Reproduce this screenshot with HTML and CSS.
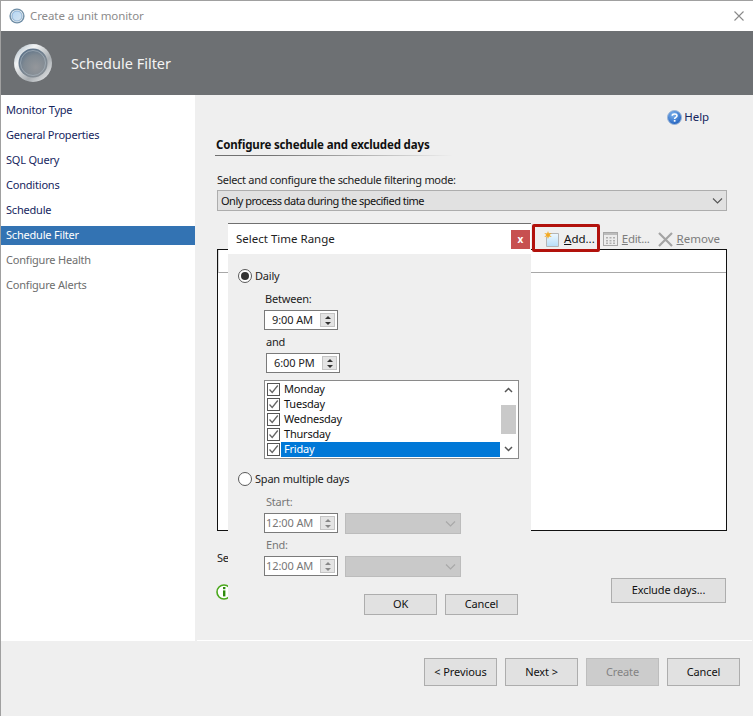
FILE: index.html
```html
<!DOCTYPE html>
<html lang="en">
<head>
<meta charset="utf-8">
<title>Create a unit monitor</title>
<link rel="stylesheet" href="styles.css">
</head>
<body>
<svg class="defs" width="0" height="0" aria-hidden="true">
  <defs>
    <radialGradient id="orbFill" cx="0.6" cy="0.65" r="0.65">
      <stop offset="0" stop-color="#94979b"/><stop offset="0.65" stop-color="#7f8992"/><stop offset="1" stop-color="#5f7489"/>
    </radialGradient>
    <linearGradient id="orbRing" x1="0" y1="0" x2="1" y2="1">
      <stop offset="0" stop-color="#9fb0bd"/><stop offset="0.3" stop-color="#f2f4f5"/><stop offset="0.65" stop-color="#a9aeb2"/><stop offset="1" stop-color="#f4f5f6"/>
    </linearGradient>
    <linearGradient id="smallOrb" x1="0" y1="0" x2="1" y2="1">
      <stop offset="0" stop-color="#b4d6f4"/><stop offset="1" stop-color="#d6e4ef"/>
    </linearGradient>
    <linearGradient id="addFill" x1="0" y1="0" x2="0" y2="1">
      <stop offset="0" stop-color="#eef8ff"/><stop offset="1" stop-color="#b7def8"/>
    </linearGradient>
    <radialGradient id="helpFill" cx="0.4" cy="0.3" r="0.8">
      <stop offset="0" stop-color="#7fb4ee"/><stop offset="1" stop-color="#1556b8"/>
    </radialGradient>
  </defs>
</svg>
<div class="window">
  <div class="titlebar">
    <svg class="title-orb" width="16" height="16" viewBox="0 0 16 16"><circle cx="8" cy="8" r="7.6" fill="#6f8ea6"/><circle cx="8" cy="8" r="6.2" fill="#e4ebf0"/><circle cx="8" cy="8" r="5" fill="url(#smallOrb)" stroke="#7fa6cb" stroke-width="0.8"/></svg>
    <span class="title-text">Create a unit monitor</span>
    <svg class="title-close" width="10" height="10" viewBox="0 0 10 10"><path d="M0.5 0.5L9.5 9.5M9.5 0.5L0.5 9.5" stroke="#8a8a8a" stroke-width="1.1" fill="none"/></svg>
  </div>
  <div class="banner">
    <svg width="38" height="38" viewBox="0 0 38 38"><circle cx="19" cy="19" r="19" fill="url(#orbRing)"/><circle cx="19" cy="19" r="14.5" fill="url(#orbFill)"/><circle cx="19" cy="19" r="12.5" fill="none" stroke="#a8b4be" stroke-width="1" opacity="0.7"/></svg>
    <span class="banner-text">Schedule Filter</span>
  </div>
  <div class="body">
    <nav class="sidebar">
      <div class="nav-item">Monitor Type</div>
      <div class="nav-item">General Properties</div>
      <div class="nav-item">SQL Query</div>
      <div class="nav-item">Conditions</div>
      <div class="nav-item">Schedule</div>
      <div class="nav-item nav-active">Schedule Filter</div>
      <div class="nav-item nav-muted">Configure Health</div>
      <div class="nav-item nav-muted">Configure Alerts</div>
    </nav>
    <main class="content">
      <div class="help-row">
        <svg width="15" height="15" viewBox="0 0 15 15"><circle cx="7.5" cy="7.5" r="7" fill="url(#helpFill)" stroke="#9db7d8" stroke-width="1"/><path d="M5.2 5.7C5.4 3.4 10 3.4 10 5.7C10 7.5 7.6 7.3 7.6 9" fill="none" stroke="#fff" stroke-width="1.5"/><rect x="6.8" y="10" width="1.7" height="1.7" fill="#fff"/></svg>
        <span class="help-text">Help</span>
      </div>
      <h2 class="heading">Configure schedule and excluded days</h2>
      <div class="mode-label">Select and configure the schedule filtering mode:</div>
      <div class="combo">
        <span>Only process data during the specified time</span>
        <svg width="11" height="6" viewBox="0 0 11 6"><path d="M1 0.5L5.5 5L10 0.5" fill="none" stroke="#555" stroke-width="1.1"/></svg>
      </div>
      <div class="toolbar">
        <span class="tool tool-add">
          <svg width="15" height="16" viewBox="0 0 15 16"><path d="M5 2.5H14.5V15.5H2.5V6" fill="url(#addFill)" stroke="#b5b5b5"/><path d="M4 0L4.9 2.6L7.8 2.1L5.6 4L7.8 6L4.9 5.4L4 8L3.1 5.4L0.2 6L2.4 4L0.2 2.1L3.1 2.6Z" fill="#f3a922"/></svg>
          <span><u>A</u>dd...</span>
        </span>
        <span class="tool tool-off tool-edit">
          <svg width="15" height="14" viewBox="0 0 15 14"><rect x="0.5" y="0.5" width="14" height="13" fill="#ececec" stroke="#a8a8a8"/><rect x="1" y="1" width="13" height="2" fill="#bcbcbc"/><path d="M3 5h2v1.5H3zM6.5 5h2v1.5h-2zM10 5h2v1.5h-2zM3 8h2v1.5H3zM6.5 8h2v1.5h-2zM10 8h2v1.5h-2zM3 10.6h2v1.5H3zM6.5 10.6h2v1.5h-2zM10 10.6h2v1.5h-2z" fill="#b0b0b0"/></svg>
          <span><u>E</u>dit...</span>
        </span>
        <span class="tool tool-off">
          <svg width="15" height="15" viewBox="0 0 15 15"><path d="M1 1L14 14M14 1L1 14" stroke="#a4a4a4" stroke-width="2.2" fill="none"/></svg>
          <span><u>R</u>emove</span>
        </span>
      </div>
      <div class="range-list">
        <div class="range-head"><span class="range-tick"></span></div>
      </div>
      <div class="hidden-note">Se</div>
      <div class="info-row">
        <svg width="15" height="16" viewBox="0 0 15 16"><circle cx="8" cy="8" r="7" fill="#fff" stroke="#4aa81c" stroke-width="1.6"/><rect x="7" y="3" width="2.4" height="2.2" fill="#2d8a0c"/><rect x="7" y="6.4" width="2.4" height="6" fill="#2d8a0c"/></svg>
        <button class="btn btn-exclude" type="button">Exclude days...</button>
      </div>
    </main>
  </div>
  <footer class="footer">
    <button class="btn btn-wizard" type="button">&lt; Previous</button>
    <button class="btn btn-wizard" type="button">Next &gt;</button>
    <button class="btn btn-wizard btn-disabled" type="button">Create</button>
    <button class="btn btn-wizard" type="button">Cancel</button>
  </footer>

  <div class="add-highlight"></div>

  <section class="dialog">
    <div class="dialog-title">
      <span>Select Time Range</span>
      <span class="dialog-close">x</span>
    </div>
    <div class="dialog-body">
      <div class="radio-row"><span class="radio radio-on"></span><span>Daily</span></div>
      <div class="field-label lbl-between">Between:</div>
      <div class="time-box box-a"><span class="time-value">9:00 AM</span><span class="spin"><span class="spin-up"></span><span class="spin-down"></span></span></div>
      <div class="field-label lbl-and">and</div>
      <div class="time-box box-b"><span class="time-value">6:00 PM</span><span class="spin"><span class="spin-up"></span><span class="spin-down"></span></span></div>
      <div class="days">
        <div class="day-rows">
          <div class="day"><span class="check"><svg width="11" height="11" viewBox="0 0 11 11"><path d="M1.5 5.5L4.2 8.5L9.8 1.5" fill="none" stroke="#666" stroke-width="1.3"/></svg></span><span class="day-name">Monday</span></div>
          <div class="day"><span class="check"><svg width="11" height="11" viewBox="0 0 11 11"><path d="M1.5 5.5L4.2 8.5L9.8 1.5" fill="none" stroke="#666" stroke-width="1.3"/></svg></span><span class="day-name">Tuesday</span></div>
          <div class="day"><span class="check"><svg width="11" height="11" viewBox="0 0 11 11"><path d="M1.5 5.5L4.2 8.5L9.8 1.5" fill="none" stroke="#666" stroke-width="1.3"/></svg></span><span class="day-name">Wednesday</span></div>
          <div class="day"><span class="check"><svg width="11" height="11" viewBox="0 0 11 11"><path d="M1.5 5.5L4.2 8.5L9.8 1.5" fill="none" stroke="#666" stroke-width="1.3"/></svg></span><span class="day-name">Thursday</span></div>
          <div class="day"><span class="check"><svg width="11" height="11" viewBox="0 0 11 11"><path d="M1.5 5.5L4.2 8.5L9.8 1.5" fill="none" stroke="#666" stroke-width="1.3"/></svg></span><span class="day-name day-selected">Friday</span></div>
        </div>
        <div class="scrollbar">
          <svg width="9" height="6" viewBox="0 0 9 6"><path d="M1 5L4.5 1.5L8 5" fill="none" stroke="#555" stroke-width="1.5"/></svg>
          <span class="thumb"></span>
          <svg width="9" height="6" viewBox="0 0 9 6"><path d="M1 1L4.5 4.5L8 1" fill="none" stroke="#555" stroke-width="1.5"/></svg>
        </div>
      </div>
      <div class="radio-row radio-row-2"><span class="radio"></span><span>Span multiple days</span></div>
      <div class="field-label lbl-start">Start:</div>
      <div class="span-row">
        <div class="time-box time-off"><span class="time-value">12:00 AM</span><span class="spin"><span class="spin-up"></span><span class="spin-down"></span></span></div>
        <div class="combo-off"><svg width="11" height="6" viewBox="0 0 11 6"><path d="M1 0.5L5.5 5L10 0.5" fill="none" stroke="#a8a8a8" stroke-width="1.1"/></svg></div>
      </div>
      <div class="field-label lbl-end">End:</div>
      <div class="span-row">
        <div class="time-box time-off"><span class="time-value">12:00 AM</span><span class="spin"><span class="spin-up"></span><span class="spin-down"></span></span></div>
        <div class="combo-off"><svg width="11" height="6" viewBox="0 0 11 6"><path d="M1 0.5L5.5 5L10 0.5" fill="none" stroke="#a8a8a8" stroke-width="1.1"/></svg></div>
      </div>
      <div class="dialog-actions">
        <button class="btn btn-dialog" type="button">OK</button>
        <button class="btn btn-dialog" type="button">Cancel</button>
      </div>
    </div>
  </section>
</div>
</body>
</html>
```

FILE: styles.css
```css
* { box-sizing: border-box; }
html, body { margin: 0; padding: 0; }
body {
  width: 753px;
  height: 716px;
  overflow: hidden;
  background: #efefef;
  font-family: "Noto Sans", "Open Sans", sans-serif;
  font-size: 11px;
  letter-spacing: -0.2px;
  line-height: 16px;
  color: #111;
}
.defs { position: absolute; }
.window {
  position: relative;
  width: 753px;
  height: 716px;
  border-left: 1px solid #a0a0a0;
  border-top: 1px solid #a0a0a0;
  background: #efefef;
}

/* title */
.titlebar {
  height: 30px;
  background: #fff;
  display: flex;
  align-items: center;
  padding: 0 9px 0 8px;
}
.title-text { margin-left: 5px; color: #8b8b8b; font-size: 11.5px; letter-spacing: -0.1px; }
.title-close { margin-left: auto; }
.banner {
  height: 64px;
  background: #6d7073;
  display: flex;
  align-items: center;
  padding-left: 13px;
  color: #f4f4f4;
}
.banner-text { margin-left: 19px; font-size: 14.5px; letter-spacing: 0; }

/* main area */
.body { display: flex; height: 546px; }
.sidebar { width: 194px; background: #fff; padding-top: 6px; flex: none; }
.nav-item {
  height: 19px;
  line-height: 18px;
  margin-bottom: 6px;
  padding-left: 5px;
  color: #16265e;
}
.nav-active { background: #3373b3; color: #fff; }
.nav-muted { color: #6e6e6e; }

.content {
  flex: 1;
  padding: 14px 25px 0 20px;
  margin: 0 1px 0 2px;
  border-bottom: 1px solid #fff;
}
.help-row {
  display: flex;
  justify-content: flex-end;
  align-items: center;
  height: 16px;
  gap: 2px;
  padding-right: 18px;
  font-size: 11.5px;
  letter-spacing: -0.1px;
}
.help-text { color: #16265e; }
.heading {
  margin: 12px 0 0 -2px;
  padding-left: 1px;
  height: 19px;
  font-size: 11.5px;
  letter-spacing: -0.15px;
  line-height: 16px;
  font-weight: 700;
  color: #111;
  border-bottom: 1px solid transparent;
  border-image: linear-gradient(90deg, #707070, #707070 20%, #efefef 95%) 1;
  width: 250px;
  white-space: nowrap;
}
.mode-label { margin-top: 16px; height: 15px; line-height: 15px; color: #222; letter-spacing: -0.3px; }
.combo {
  margin-top: 3px;
  height: 21px;
  background: #e1e1e1;
  border: 1px solid #adadad;
  display: flex;
  align-items: center;
  justify-content: space-between;
  padding: 0 3px 0 3px;
  color: #111;
  letter-spacing: -0.5px;
}
.toolbar {
  margin: 19px 0 1px;
  height: 18px;
  display: flex;
  justify-content: flex-end;
  align-items: center;
  gap: 8px;
  padding-right: 7px;
  font-size: 11.5px;
  letter-spacing: 0;
}
.tool { display: inline-flex; align-items: center; gap: 4px; }
.tool-add { color: #111; gap: 5px; }
.tool-off { color: #7c7c7c; }
.tool-edit { letter-spacing: -0.3px; }
.range-list {
  height: 282px;
  background: #fff;
  border: 1px solid #111;
}
.range-head {
  height: 23px;
  border-bottom: 1px solid #a8a8a8;
  border-left: 1px solid #d8d8d8;
  position: relative;
}
.range-tick {
  position: absolute;
  left: 9px;
  top: 6px;
  width: 1px;
  height: 3px;
  background: #d97a1a;
}
.hidden-note { margin-top: 19px; height: 16px; color: #222; }
.info-row {
  margin: 12px 1px 0 0;
  height: 25px;
  display: flex;
  justify-content: space-between;
  align-items: center;
}
.info-row svg { margin-bottom: -3px; margin-left: -1px; }

/* buttons */
.btn {
  font: inherit;
  letter-spacing: -0.1px;
  color: #111;
  background: #e1e1e1;
  border: 1px solid #adadad;
  padding: 0;
  border-radius: 0;
}
.btn-exclude { width: 115px; height: 25px; padding-bottom: 1px; }
.btn-wizard { width: 73px; height: 28px; }
.btn-dialog { width: 73px; height: 21px; padding-bottom: 1px; }
.btn-disabled { background: #cccccc; color: #838383; border-color: #bdbdbd; }

.footer {
  height: 75px;
  display: flex;
  justify-content: flex-end;
  gap: 8px;
  padding: 17px 13px 0 0;
}

/* overlays */
.add-highlight {
  position: absolute;
  left: 531px;
  top: 223px;
  width: 68px;
  height: 28px;
  border: 3px solid #b2120c;
  border-radius: 2px;
}
.dialog {
  position: absolute;
  left: 227px;
  top: 222px;
  width: 303px;
  height: 417px;
  background: #efefef;
  border-top: 1px solid #707070;
}
.dialog-title {
  height: 30px;
  background: #fff;
  display: flex;
  align-items: center;
  justify-content: space-between;
  padding: 0 1px 0 8px;
  color: #222;
  font-size: 11.5px;
  letter-spacing: 0;
}
.dialog-close {
  width: 19px;
  height: 19px;
  background: #c75050;
  color: #fff;
  font-weight: 700;
  font-size: 10px;
  line-height: 18px;
  text-align: center;
}
.dialog-body { padding: 14px 0 0 10px; }
.radio-row { display: flex; align-items: center; gap: 3px; height: 15px; color: #222; }
.radio-row-2 { margin-top: 12px; }
.radio {
  width: 14px;
  height: 14px;
  border-radius: 50%;
  background: #fff;
  border: 1px solid #5a5a5a;
  position: relative;
  flex: none;
}
.radio-on::after {
  content: "";
  position: absolute;
  left: 2px;
  top: 2px;
  width: 8px;
  height: 8px;
  border-radius: 50%;
  background: #333;
}
.field-label { height: 16px; line-height: 16px; color: #222; }
.lbl-between { margin: 8px 0 3px 27px; }
.lbl-and { margin: 4px 0 3px 28px; }
.lbl-start { margin: 8px 0 3px 28px; color: #777; }
.lbl-end { margin: 3px 0 3px 28px; color: #777; }
.time-box {
  width: 74px;
  height: 20px;
  background: #fff;
  border: 1px solid #7a7a7a;
  display: flex;
  align-items: center;
  justify-content: space-between;
  padding: 0 2px 0 7px;
  color: #222;
  letter-spacing: -0.1px;
}
.box-a { margin-left: 26px; }
.box-b { margin-left: 28px; }
.time-off { padding-left: 1px; color: #777; margin: 0; flex: none; }
.spin {
  width: 15px;
  height: 14px;
  background: #e4e4e4;
  border: 1px solid #c4c4c4;
  display: flex;
  flex-direction: column;
  align-items: center;
  justify-content: space-around;
  flex: none;
}
.spin-up, .spin-down { width: 0; height: 0; border-left: 3px solid transparent; border-right: 3px solid transparent; }
.spin-up { border-bottom: 3px solid #333; }
.spin-down { border-top: 3px solid #333; }
.time-off .spin-up { border-bottom-color: #888; }
.time-off .spin-down { border-top-color: #888; }

.days {
  margin: 7px 0 0 26px;
  width: 255px;
  height: 79px;
  background: #fff;
  border: 1px solid #8a8a8a;
  display: flex;
}
.day-rows { width: 235px; padding-top: 1px; flex: none; }
.day { height: 15px; display: flex; align-items: center; padding-left: 2px; color: #111; }
.check {
  width: 13px;
  height: 13px;
  border: 1px solid #555;
  background: #fff;
  display: flex;
  align-items: center;
  justify-content: center;
  flex: none;
}
.day-name { flex: 1; height: 15px; line-height: 14px; padding-left: 3px; margin-left: 1px; }
.day-selected { background: #0078d7; color: #fff; }
.scrollbar {
  width: 15px;
  margin-left: 1px;
  display: flex;
  flex-direction: column;
  align-items: center;
  padding-top: 6px;
}
.thumb { width: 15px; height: 29px; background: #c9c9c9; margin: 12px 0 12px; }

.span-row { display: flex; gap: 7px; margin-left: 26px; }
.combo-off {
  width: 116px;
  height: 21px;
  background: #c9c9c9;
  border: 1px solid #bcbcbc;
  display: flex;
  align-items: center;
  justify-content: flex-end;
  padding-right: 4px;
}
.dialog-actions { display: flex; gap: 8px; margin: 17px 0 0 126px; }
```
